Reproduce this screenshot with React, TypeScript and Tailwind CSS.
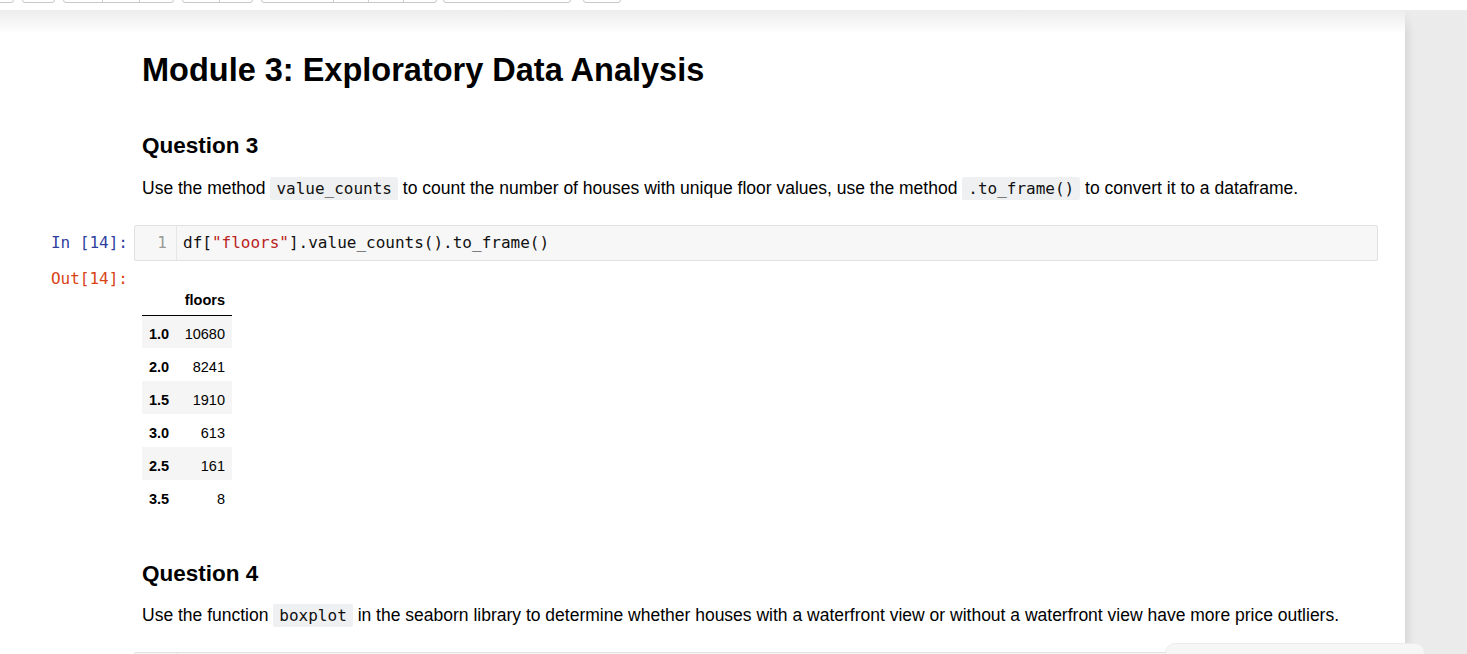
import React from "react";

const sans = { fontFamily: '"Liberation Sans", Arial, sans-serif' };
const mono = { fontFamily: '"DejaVu Sans Mono", "Liberation Mono", monospace' };

function InlineCode({ children }: { children: React.ReactNode }) {
  return (
    <code
      style={mono}
      className="bg-[#eff0f1] rounded-[2px] px-[6px] py-[2px] text-[16px] text-[#111]"
    >
      {children}
    </code>
  );
}

const rows = [
  { idx: "1.0", val: "10680" },
  { idx: "2.0", val: "8241" },
  { idx: "1.5", val: "1910" },
  { idx: "3.0", val: "613" },
  { idx: "2.5", val: "161" },
  { idx: "3.5", val: "8" },
];

// toolbar groups: [width, dividers]
const toolbar: [number, number[]][] = [
  [17, []],
  [33, []],
  [111, [38, 75]],
  [71, [36]],
  [176, [71, 106, 141]],
  [128, []],
  [38, []],
];

export default function App() {
  return (
    <div style={sans} className="w-[1467px] h-[654px] overflow-hidden relative bg-white text-black">
      {/* toolbar, mostly scrolled off */}
      <div className="h-[10px] flex items-end gap-[8px] overflow-hidden">
        {toolbar.map(([w, divs], i) => (
          <div
            key={i}
            style={{ width: w }}
            className={`h-[20px] -mt-[17px] mb-[7px] border border-[#c8c8c8] rounded-b-[3px] bg-white relative shrink-0 ${
              i === 0 ? "-ml-[3px]" : i === 5 ? "-ml-[2px]" : i === 6 ? "ml-[4px]" : ""
            }`}
          >
            {divs.map((d) => (
              <div key={d} style={{ left: d }} className="absolute top-0 bottom-0 w-px bg-[#d0d0d0]" />
            ))}
          </div>
        ))}
      </div>

      <div className="relative flex h-[644px]">
        {/* header shadow */}
        <div className="absolute left-0 right-0 top-0 h-[24px] bg-gradient-to-b from-[#ececec] to-transparent pointer-events-none z-10" />

        {/* notebook */}
        <div className="w-[1405px] shrink-0 bg-white">
          <div className="w-[1378px]">
            {/* markdown cell */}
            <div className="pl-[142px] pt-[40px]">
              <h1 className="text-[32.5px] leading-[40px] font-bold">Module 3: Exploratory Data Analysis</h1>
              <h3 className="text-[22.5px] leading-[28px] font-bold mt-[42px]">Question 3</h3>
              <p className="text-[17.5px] leading-[24px] mt-[16px]">
                Use the method <InlineCode>value_counts</InlineCode> to count the number of houses with unique floor
                values, use the method <InlineCode>.to_frame()</InlineCode> to convert it to a dataframe.
              </p>
            </div>

            {/* code cell */}
            <div className="mt-[24px] flex">
              <div style={mono} className="w-[134px] shrink-0 text-right pr-[6px] text-[16px] leading-[36px] text-[#303F9F]">
                In&nbsp;[14]:
              </div>
              <div className="flex-1 h-[36px] border border-[#e0e0e0] bg-[#f7f7f7] rounded-[2px] flex">
                <div
                  style={mono}
                  className="w-[42px] border-r border-[#e6e6e6] text-right pr-[9px] text-[16px] leading-[34px] text-[#999]"
                >
                  1
                </div>
                <div style={mono} className="pl-[6px] text-[16px] leading-[34px] text-[#111]">
                  df[<span className="text-[#BA2121]">"floors"</span>].value_counts().to_frame()
                </div>
              </div>
            </div>

            {/* output */}
            <div className="flex">
              <div style={mono} className="w-[134px] shrink-0 text-right pr-[6px] pt-[6px] text-[16px] leading-[24px] text-[#D84315]">
                Out[14]:
              </div>
              <div className="pl-[8px] pt-[26px]">
                <table className="border-collapse text-[14.5px]">
                  <thead>
                    <tr className="h-[28px] border-b border-black">
                      <th className="w-[34px]"></th>
                      <th className="w-[56px] text-right pr-[7px] font-bold align-top pt-[3px]">floors</th>
                    </tr>
                  </thead>
                  <tbody>
                    {rows.map((r, i) => (
                      <tr key={r.idx} className={`h-[33px] ${i % 2 === 0 ? "bg-[#f5f5f5]" : ""}`}>
                        <th className="text-center font-bold pt-[6px]">{r.idx}</th>
                        <td className="text-right pr-[7px] pt-[6px]">{r.val}</td>
                      </tr>
                    ))}
                  </tbody>
                </table>
              </div>
            </div>

            {/* markdown cell */}
            <div className="pl-[142px] pt-[47px]">
              <h3 className="text-[22.5px] leading-[28px] font-bold">Question 4</h3>
              <p className="text-[17.5px] leading-[24px] mt-[15px]">
                Use the function <InlineCode>boxplot</InlineCode> in the seaborn library to determine whether houses with
                a waterfront view or without a waterfront view have more price outliers.
              </p>
            </div>

            {/* next code cell */}
            <div className="mt-[24px] ml-[134px] h-[40px] border border-[#e0e0e0] bg-[#f7f7f7] rounded-[2px] flex">
              <div className="w-[42px] border-r border-[#e6e6e6]" />
            </div>
          </div>
        </div>

        {/* page background at right */}
        <div className="flex-1 bg-[#ebebeb] shadow-[inset_10px_0_10px_-8px_rgba(0,0,0,0.12)]" />

        {/* floating panel bottom right */}
        <div className="absolute left-[1165px] top-[633px] w-[260px] h-[30px] rounded-[10px] bg-[#f6f6f6] border border-[#ececec] z-20" />
      </div>
    </div>
  );
}
